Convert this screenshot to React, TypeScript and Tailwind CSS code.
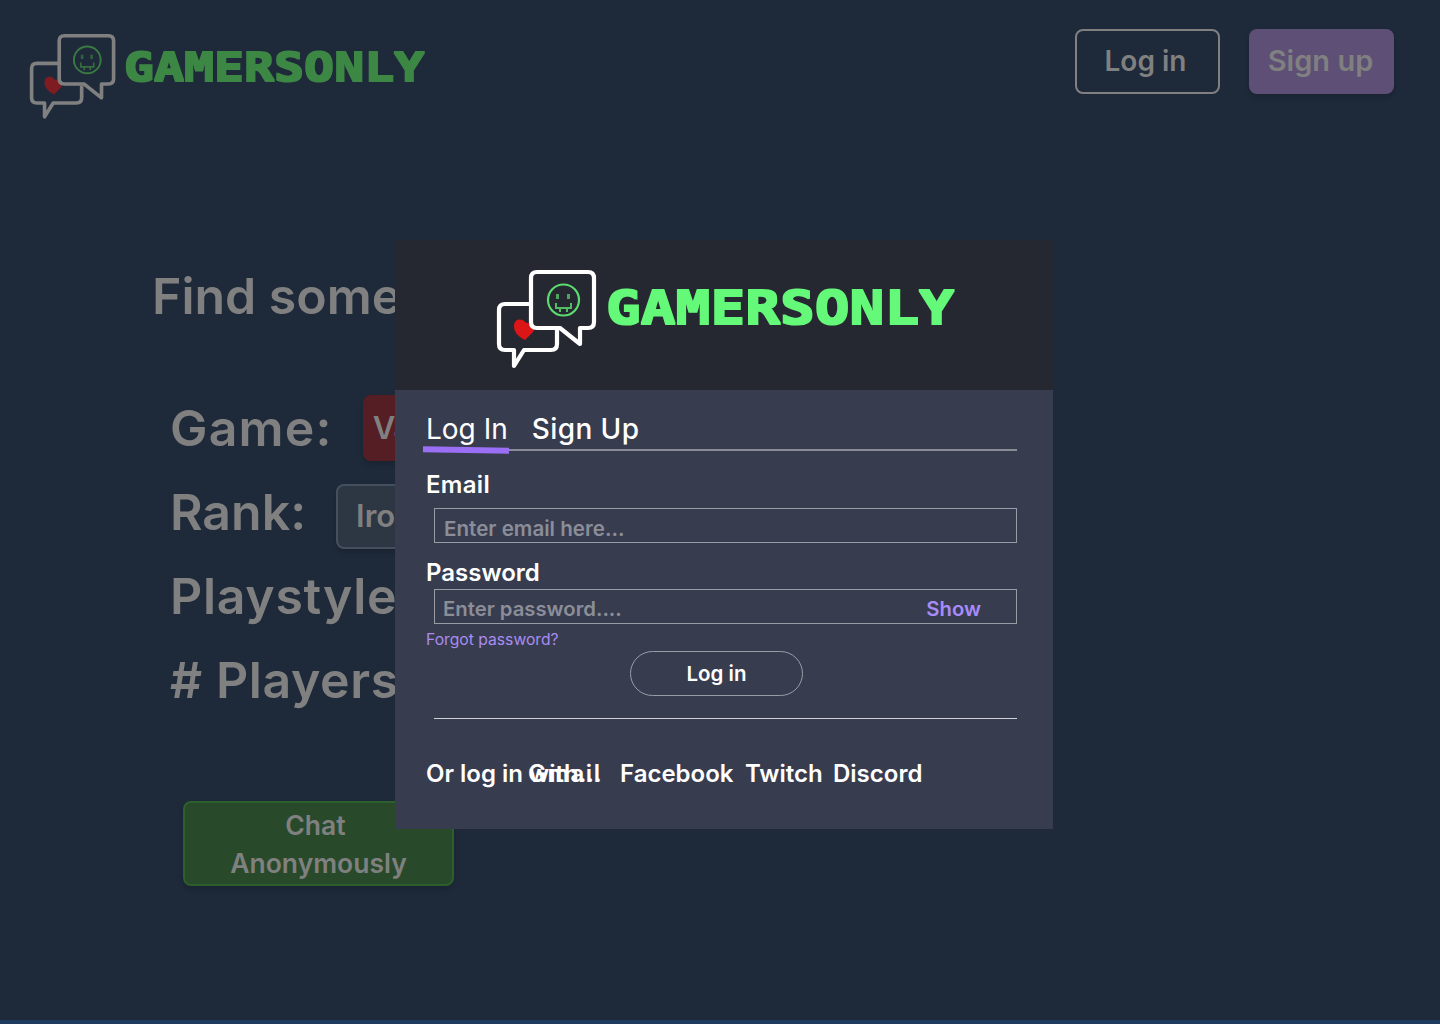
import React from "react";

function Logo({ w, bubble, green, red, textFill, id }: { w: number; bubble: string; green: string; red: string; textFill: string; id: string }) {
  return (
    <svg width={w} height={(w * 100) / 460} viewBox="0 0 460 100" className="block shrink-0 overflow-visible">
      <defs>
        <filter id={id} x="-5%" y="-20%" width="110%" height="140%">
          <feMorphology operator="dilate" radius="1.1" />
          <feGaussianBlur stdDeviation="0.45" />
        </filter>
        <filter id={`${id}s`} x="-10%" y="-10%" width="120%" height="120%">
          <feGaussianBlur stdDeviation="0.45" />
        </filter>
      </defs>
      <g filter={`url(#${id}s)`}>
        <path d="M35 34 H9 Q3 34 3 40 V74 Q3 80 9 80 H18 V96 L28 80 H55 Q61 80 61 74 V60" fill="none" stroke={bubble} strokeWidth="4.2" strokeLinejoin="round" />
        <path d="M18 56 C18 48 27 48 30 53 C35 52 41 57 37 62 L29 70 C23 67 18 63 18 56 Z" fill={red} />
        <path d="M41 2 H92 Q98 2 98 8 V52 Q98 58 92 58 H84 V74 L64 58 H41 Q35 58 35 52 V8 Q35 2 41 2 Z" fill="none" stroke={bubble} strokeWidth="4.2" strokeLinejoin="round" />
        <circle cx="67.5" cy="30" r="15.5" fill="none" stroke={green} strokeWidth="2.2" opacity="0.85" />
        <rect x="60" y="24" width="3" height="5" fill={green} opacity="0.6" />
        <rect x="71" y="24" width="3" height="5" fill={green} opacity="0.6" />
        <path d="M60 33 V38 H75 V33 M64 38 V42 M71 38 V42" fill="none" stroke={green} strokeWidth="2" opacity="0.7" />
      </g>
      <text x="110" y="54" textLength="348" lengthAdjust="spacingAndGlyphs" fill={textFill} filter={`url(#${id})`} fontFamily="'DejaVu Sans Mono', monospace" fontWeight="700" fontSize="46">GAMERSONLY</text>
    </svg>
  );
}

function Row({ label, children, className }: { label: string; children?: React.ReactNode; className: string }) {
  return (
    <div className={`flex h-[84px] items-center text-[50px] font-semibold text-[#808080] ${className}`}>
      <span className="whitespace-nowrap">{label}</span>
      {children}
    </div>
  );
}

export default function App() {
  return (
    <div className="relative h-[1024px] w-[1440px] overflow-hidden bg-[#1e2939] border-b-4 border-[#1e3a5f] font-['Inter',sans-serif]">
      <header className="flex items-start justify-between pl-[29px] pr-[46px] pt-[29px]">
        <div className="pt-[5px]">
          <Logo id="a" w={397} bubble="#808080" green="#3e8745" red="#7f1d22" textFill="#3e8745" />
        </div>
        <div className="flex gap-[29px]">
          <button className="h-[65px] w-[145px] rounded-lg border-2 border-[#808080] pb-[2px] pr-[4px] text-[28px] font-semibold text-[#808080]">Log in</button>
          <button className="h-[65px] w-[145px] rounded-lg bg-[#5d4f75] pb-[2px] pr-[2px] text-[29px] font-semibold text-[#808080] shadow-md">Sign up</button>
        </div>
      </header>

      <main className="pl-[152px] pt-[144px]">
        <h1 className="text-[50px] font-semibold leading-[64px] text-[#808080] whitespace-nowrap">Find someone to play with</h1>
        <div className="mt-[58px] pl-[18px]">
          <Row label="Game:" className="gap-[30px] tracking-[1.2px]">
            <div className="flex h-[66px] w-[150px] items-center rounded-lg bg-[#551d24] pl-[10px] text-[31px] font-semibold tracking-normal text-[#808080] shadow-md">Valorant</div>
          </Row>
          <Row label="Rank:" className="gap-[30px]">
            <div className="mt-[8px] flex h-[65px] w-[150px] items-center rounded-lg border-2 border-[#464f5d] bg-[#2d3744] pl-[18px] text-[31px] font-semibold text-[#808080] shadow-md">Iron</div>
          </Row>
          <Row label="Playstyle:" className="tracking-[0.7px]" />
          <Row label="# Players:" className="tracking-[0.6px]" />
        </div>
        <button className="ml-[31px] mt-[79px] block h-[85px] w-[271px] rounded-lg border-2 border-[#2b5f2c] bg-[#284a2a] text-[26.5px] font-semibold leading-[38px] text-[#808080] shadow-md">
          <span className="mr-[6px]">Chat</span>
          <br />
          Anonymously
        </button>
      </main>

      <div className="absolute left-[395px] top-[240px] h-[589px] w-[658px] bg-[#383c4f]">
        <div className="flex h-[150px] items-start bg-[#252830] pl-[101px] pt-[30px]">
          <Logo id="b" w={460} bubble="#ffffff" green="#65f97a" red="#dc1414" textFill="#65f97a" />
        </div>
        <div className="pl-[31px] pr-[36px]">
          <div className="relative ml-[8px] h-[61px]">
            <div className="absolute -left-[8px] top-[21px] flex gap-[24px] text-[28px] leading-[36px] text-white">
              <span>Log In</span>
              <span className="font-medium tracking-[0.4px]">Sign Up</span>
            </div>
            <div className="absolute bottom-0 left-0 right-0 h-[2px] bg-[#8a8c96]" />
            <div className="absolute -left-[11px] bottom-[-2px] h-[6px] w-[86px] rotate-[1deg] bg-[#9b6ff5]" />
          </div>
          <label className="mt-[19px] block text-[24px] font-semibold leading-[30px] tracking-[0.3px] text-white">Email</label>
          <input placeholder="Enter email here..." className="ml-[8px] mt-[8px] block h-[35px] w-[583px] border border-[#9a9ca5] bg-transparent px-[9px] pt-[5px] text-[20.6px] font-semibold placeholder:text-[#8b8e98] outline-none" />
          <label className="mt-[15px] block text-[24px] font-semibold leading-[30px] text-white">Password</label>
          <div className="ml-[8px] mt-[1px] flex h-[35px] w-[583px] items-center justify-between border border-[#9a9ca5] pl-[8px] pr-[35px] pt-[5px] text-[20.3px] font-semibold">
            <input placeholder="Enter password...." className="min-w-0 flex-1 bg-transparent placeholder:text-[#8b8e98] outline-none" />
            <span className="text-[#a78bfa]">Show</span>
          </div>
          <a className="mt-[5px] block text-[15.7px] leading-[22px] text-[#a98cf0]">Forgot password?</a>
          <button className="ml-[204px] block h-[45px] w-[173px] rounded-full border border-[#9a9ca5] pt-[1px] text-[20.5px] font-semibold text-white">Log in</button>
          <div className="ml-[8px] mt-[22px] h-px w-[583px] bg-[#d0d1d5]" />
          <div className="mt-[38px] flex items-center pt-[1px] text-[24px] font-semibold leading-[32px] text-white whitespace-nowrap">
            <span className="w-[102px]">Or log in with...</span>
            <span className="w-[92px] tracking-[1.5px]">Gmail</span>
            <span className="w-[125px]">Facebook</span>
            <span className="w-[88px]">Twitch</span>
            <span>Discord</span>
          </div>
        </div>
      </div>
    </div>
  );
}
